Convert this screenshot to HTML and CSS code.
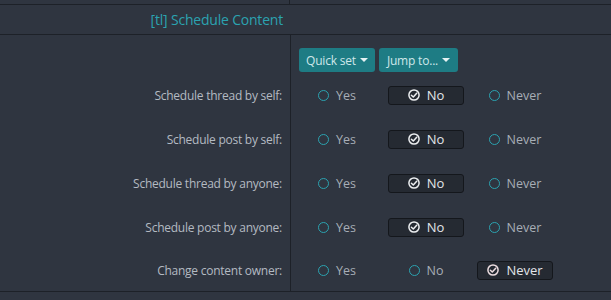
FILE: index.html
```html
<!DOCTYPE html>
<html lang="en">
<head>
    <meta charset="UTF-8">
    <title>Schedule Content permissions</title>
    <link rel="stylesheet" href="styles.css">
</head>
<body>
    <div class="perm-table">
        <div class="top-strip">
            <div class="cell-left"></div>
            <div class="cell-right"></div>
        </div>

        <div class="group-header">
            <h3>[tl] Schedule Content</h3>
        </div>

        <div class="group-body">
            <div class="labels">
                <div class="toolbar-spacer"></div>
                <div class="perm-label">Schedule thread by self:</div>
                <div class="perm-label">Schedule post by self:</div>
                <div class="perm-label">Schedule thread by anyone:</div>
                <div class="perm-label">Schedule post by anyone:</div>
                <div class="perm-label">Change content owner:</div>
            </div>

            <div class="choices">
                <div class="toolbar">
                    <button class="menu-btn">Quick set <span class="caret"></span></button>
                    <button class="menu-btn wide">Jump to... <span class="caret"></span></button>
                </div>

                <div class="choice-row">
                    <span class="choice"><i class="radio"></i>Yes</span>
                    <span class="choice selected"><svg class="check" viewBox="0 0 12 12"><circle cx="6" cy="6" r="5.1"/><path d="M3.4 6.2 L5.3 8 L8.7 4.2"/></svg>No</span>
                    <span class="choice"><i class="radio"></i>Never</span>
                </div>
                <div class="choice-row">
                    <span class="choice"><i class="radio"></i>Yes</span>
                    <span class="choice selected"><svg class="check" viewBox="0 0 12 12"><circle cx="6" cy="6" r="5.1"/><path d="M3.4 6.2 L5.3 8 L8.7 4.2"/></svg>No</span>
                    <span class="choice"><i class="radio"></i>Never</span>
                </div>
                <div class="choice-row">
                    <span class="choice"><i class="radio"></i>Yes</span>
                    <span class="choice selected"><svg class="check" viewBox="0 0 12 12"><circle cx="6" cy="6" r="5.1"/><path d="M3.4 6.2 L5.3 8 L8.7 4.2"/></svg>No</span>
                    <span class="choice"><i class="radio"></i>Never</span>
                </div>
                <div class="choice-row">
                    <span class="choice"><i class="radio"></i>Yes</span>
                    <span class="choice selected"><svg class="check" viewBox="0 0 12 12"><circle cx="6" cy="6" r="5.1"/><path d="M3.4 6.2 L5.3 8 L8.7 4.2"/></svg>No</span>
                    <span class="choice"><i class="radio"></i>Never</span>
                </div>
                <div class="choice-row">
                    <span class="choice"><i class="radio"></i>Yes</span>
                    <span class="choice"><i class="radio"></i>No</span>
                    <span class="choice selected never"><svg class="check" viewBox="0 0 12 12"><circle cx="6" cy="6" r="5.1"/><path d="M3.4 6.2 L5.3 8 L8.7 4.2"/></svg>Never</span>
                </div>
            </div>
        </div>
    </div>
</body>
</html>
```

FILE: styles.css
```css
:root {
    --bg: #2f3540;
    --line: #1d2128;
    --teal: #1e7c84;
    --teal-text: #2ba3b0;
    --label: #b4bac2;
    --option: #a7aeb6;
}

* {
    margin: 0;
    padding: 0;
    box-sizing: border-box;
}

body {
    font-family: 'Open Sans', sans-serif;
    background-color: var(--bg);
    color: var(--label);
    font-size: 12px;
}

.perm-table {
    width: 611px;
}

.top-strip {
    display: flex;
    height: 5px;
    border-bottom: 1px solid var(--line);
}

.top-strip .cell-left {
    width: 290px;
    border-right: 1px solid var(--line);
}

.group-header {
    height: 30px;
    border-bottom: 1px solid var(--line);
    display: flex;
    align-items: center;
}

.group-header h3 {
    width: 290px;
    padding-right: 7px;
    text-align: right;
    font-weight: 400;
    font-size: 14px;
    color: var(--teal-text);
    letter-spacing: -0.2px;
}

.group-body {
    display: flex;
    border-bottom: 1px solid var(--line);
}

.labels {
    width: 291px;
    border-right: 1px solid var(--line);
    padding-right: 8px;
    padding-top: 13px;
}

.toolbar-spacer {
    height: 25px;
}

.perm-label {
    height: 44px;
    display: flex;
    align-items: center;
    justify-content: flex-end;
    letter-spacing: -0.25px;
}

.perm-label:last-child,
.choice-row:last-child {
    height: 42px;
}

.choices {
    padding-top: 13px;
    padding-left: 8px;
}

.toolbar {
    display: flex;
    gap: 4px;
    height: 25px;
}

.menu-btn {
    width: 76px;
    height: 24px;
    border: none;
    border-radius: 3px;
    background: var(--teal);
    color: #cfe7ea;
    font-family: 'Open Sans', sans-serif;
    font-size: 12px;
    letter-spacing: -0.2px;
    display: flex;
    align-items: center;
    justify-content: center;
    gap: 4px;
}

.menu-btn.wide {
    width: 79px;
}

.caret {
    width: 0;
    height: 0;
    border-left: 4px solid transparent;
    border-right: 4px solid transparent;
    border-top: 4px solid #e6f2f3;
}

.choice-row {
    height: 44px;
    display: grid;
    grid-template-columns: 76px 76px 76px;
    column-gap: 13px;
    align-items: center;
}

.choice {
    height: 19px;
    display: flex;
    align-items: center;
    justify-content: center;
    gap: 7px;
    color: var(--option);
    font-size: 12.5px;
    border: 1px solid transparent;
    border-radius: 3px;
}

.choice.selected {
    background: #252a32;
    border-color: #14171c;
    color: #e2e5e9;
    font-size: 13px;
}

.radio {
    width: 11px;
    height: 11px;
    border: 1.6px solid var(--teal-text);
    border-radius: 50%;
}

.check {
    width: 12px;
    height: 12px;
    fill: none;
    stroke: #eceef0;
    stroke-width: 1.5;
    stroke-linecap: round;
    stroke-linejoin: round;
}

.never .check {
    stroke: #ecdde0;
}
```
